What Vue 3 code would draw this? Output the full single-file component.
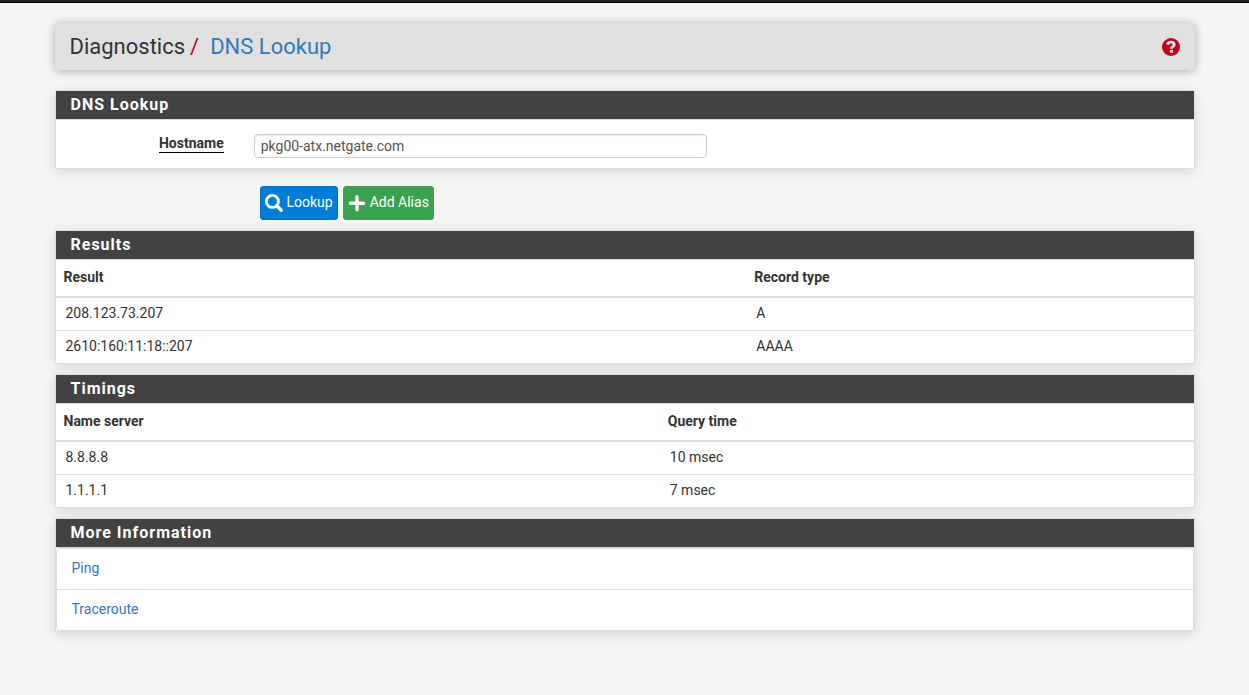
<script setup>
import { ref } from 'vue'

const hostname = ref('pkg00-atx.netgate.com')

const tables = [
  {
    title: 'Results',
    name: 'results',
    head: ['Result', 'Record type'],
    rows: [
      ['208.123.73.207', 'A'],
      ['2610:160:11:18::207', 'AAAA'],
    ],
  },
  {
    title: 'Timings',
    name: 'timings',
    head: ['Name server', 'Query time'],
    rows: [
      ['8.8.8.8', '10 msec'],
      ['1.1.1.1', '7 msec'],
    ],
  },
]

const links = ['Ping', 'Traceroute']
</script>

<template>
  <div class="topbar"></div>
  <main class="container">
    <header class="page-header">
      <h1 class="crumbs">
        <span>Diagnostics</span><span class="slash">/</span><a href="#">DNS Lookup</a>
      </h1>
      <a class="help" href="#" aria-label="Help">
        <svg viewBox="0 0 18 18" width="18" height="18" aria-hidden="true">
          <circle cx="9" cy="9" r="9" fill="#c0001d" />
          <path d="M5.4 6.6C5.9 4.8 7.3 4.1 8.9 4.1c2 0 3.3 1 3.3 2.6 0 2.1-2.8 2-2.8 4.1" fill="none" stroke="#e0e0e0" stroke-width="2.8" />
          <rect x="7.9" y="12" width="3" height="2.8" rx=".3" fill="#e0e0e0" />
        </svg>
      </a>
    </header>

    <form @submit.prevent>
      <section class="panel lookup">
        <h2 class="panel-title">DNS Lookup</h2>
        <div class="form-row">
          <label for="hostname"><span>Hostname</span></label>
          <div class="field"><input id="hostname" v-model="hostname" type="text" /></div>
        </div>
      </section>
      <div class="actions">
        <button class="btn primary" type="submit">
          <svg viewBox="0 0 18 18" width="18" height="18" aria-hidden="true">
            <circle cx="7.4" cy="7.4" r="6" fill="none" stroke="#fff" stroke-width="2.8" />
            <path d="M11.8 11.8l4.4 4.4" stroke="#fff" stroke-width="3.4" stroke-linecap="round" />
          </svg>
          <span>Lookup</span>
        </button>
        <button class="btn success" type="button">
          <svg viewBox="0 0 18 18" width="18" height="18" aria-hidden="true">
            <path d="M9 2.6v13.2M2.4 9.2h13.2" stroke="#fff" stroke-width="3.4" stroke-linecap="round" />
          </svg>
          <span>Add Alias</span>
        </button>
      </div>
    </form>

    <section v-for="t in tables" :key="t.name" class="panel">
      <h2 class="panel-title">{{ t.title }}</h2>
      <table :class="t.name">
        <thead>
          <tr><th v-for="h in t.head" :key="h" scope="col">{{ h }}</th></tr>
        </thead>
        <tbody>
          <tr v-for="r in t.rows" :key="r[0]"><td v-for="c in r" :key="c">{{ c }}</td></tr>
        </tbody>
      </table>
    </section>

    <section class="panel">
      <h2 class="panel-title">More Information</h2>
      <ul class="links">
        <li v-for="l in links" :key="l"><a href="#">{{ l }}</a></li>
      </ul>
    </section>
  </main>
</template>

<style>
body {
  margin: 0;
  background: #f5f5f5;
}
</style>

<style scoped>
.topbar {
  height: 2px;
  background: #212121;
  border-bottom: 1px solid #000;
}
.container {
  box-sizing: border-box;
  max-width: 1170px;
  margin: 0 auto;
  padding: 20px 15px;
  font-family: Roboto, "Liberation Sans", sans-serif;
  font-size: 14px;
  line-height: 18px;
  color: #333;
}
a {
  color: #337ab7;
  text-decoration: none;
}
.page-header {
  display: flex;
  align-items: center;
  justify-content: space-between;
  height: 47px;
  margin-bottom: 20px;
  padding: 0 15px;
  background: #e0e0e0;
  border-radius: 3px;
  box-shadow: 0 1px 10px rgba(0, 0, 0, 0.3);
}
.crumbs {
  margin: 0;
  font-size: 22px;
  font-weight: 400;
  line-height: 28px;
}
.slash {
  margin: 0 11px 0 5px;
  color: #c0001d;
}
.help {
  display: flex;
}
.panel {
  margin-bottom: 10px;
  background: #fff;
  border: 1px solid #ddd;
  box-shadow: 0 3px 12px rgba(0, 0, 0, 0.12);
}
.lookup {
  margin-bottom: 17px;
}
.panel-title {
  margin: 0;
  padding: 4px 15px;
  background: #424242;
  border-bottom: 1px solid #ddd;
  color: #fff;
  font-size: 16px;
  font-weight: 700;
  line-height: 20px;
  letter-spacing: 1px;
}
.form-row {
  display: flex;
  padding: 14px 0 10px;
}
label {
  box-sizing: border-box;
  width: 16.1%;
  padding-right: 15px;
  text-align: right;
  font-weight: 700;
  line-height: 18px;
}
label span {
  display: inline-block;
  border-bottom: 1px solid #000;
  line-height: 17px;
}
.field {
  box-sizing: border-box;
  width: 42.5%;
  padding: 0 15px;
}
input {
  display: block;
  box-sizing: border-box;
  width: 100%;
  height: 24px;
  padding: 0 6px;
  border: 1px solid #ccc;
  border-radius: 4px;
  background: #fff;
  box-shadow: inset 0 1px 1px rgba(0, 0, 0, 0.08);
  color: #555;
  font: inherit;
}
.actions {
  display: flex;
  gap: 5px;
  margin: 0 0 10px 205px;
}
.btn {
  display: flex;
  align-items: center;
  gap: 4px;
  height: 34px;
  padding: 0 4px;
  border: 1px solid;
  border-radius: 3px;
  color: #fff;
  font: inherit;
}
.btn span {
  padding-bottom: 2px;
}
.primary {
  background: #007dd6;
  border-color: #0070c0;
}
.success {
  background: #3aa24d;
  border-color: #43a047;
}
table {
  width: 100%;
  border-collapse: collapse;
  table-layout: fixed;
}
th {
  padding: 8px 8px 10px;
  border-bottom: 2px solid #ddd;
  text-align: left;
  font-weight: 700;
}
.results th:first-child {
  width: 60.7%;
  box-sizing: border-box;
}
.timings th:first-child {
  width: 53.1%;
  box-sizing: border-box;
}
td {
  padding: 6px 10px 8px;
  border-top: 1px solid #ddd;
}
.links {
  margin: 0;
  padding: 0;
  list-style: none;
  border: 1px solid #ddd;
  border-radius: 4px;
}
.links li {
  padding: 10px 15px 12px;
}
.links li + li {
  border-top: 1px solid #ddd;
}
</style>
